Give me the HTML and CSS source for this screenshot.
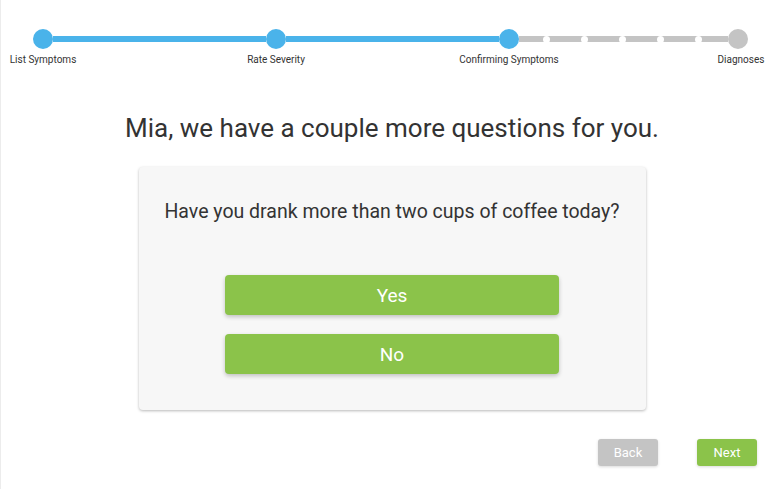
FILE: index.html
```html
<!DOCTYPE html>
<html>
<head>
<meta charset="utf-8">
<link rel="stylesheet" href="styles.css">
</head>
<body>
<div class="page">
  <div class="stepper">
    <div class="step"><div class="dot done"></div><div class="label">List Symptoms</div></div>
    <div class="line done l1"></div>
    <div class="step"><div class="dot done"></div><div class="label">Rate Severity</div></div>
    <div class="line done l2"></div>
    <div class="step"><div class="dot done"></div><div class="label">Confirming Symptoms</div></div>
    <div class="line todo l3">
      <span class="mini"></span><span class="mini"></span><span class="mini"></span><span class="mini"></span><span class="mini"></span>
    </div>
    <div class="step"><div class="dot todo"></div><div class="label last">Diagnoses</div></div>
  </div>

  <h1 class="title">Mia, we have a couple more questions for you.</h1>

  <div class="card">
    <p class="question">Have you drank more than two cups of coffee today?</p>
    <div class="answers">
      <button class="answer">Yes</button>
      <button class="answer">No</button>
    </div>
  </div>

  <div class="nav">
    <button class="navbtn back">Back</button>
    <button class="navbtn next">Next</button>
  </div>
</div>
</body>
</html>
```

FILE: styles.css
```css
* { box-sizing: border-box; }
html, body { margin: 0; padding: 0; background: #fff; }
body { font-family: Roboto, "Noto Sans", Arial, sans-serif; color: #333; }

.page {
  width: 783px;
  height: 489px;
  border-left: 1px solid #ececec;
  display: flex;
  flex-direction: column;
}

.stepper {
  display: flex;
  align-items: flex-start;
  padding: 29px 0 0 32px;
}
.step {
  width: 20px;
  flex: 0 0 20px;
  display: flex;
  flex-direction: column;
  align-items: center;
}
.dot {
  width: 20px;
  height: 20px;
  border-radius: 50%;
}
.dot.done { background: #4ab3ea; }
.dot.todo { background: #c4c4c4; }
.label {
  margin-top: 5px;
  font-size: 10px;
  line-height: 12px;
  white-space: nowrap;
  color: #333;
}
.label.last { position: relative; left: 3px; }

.line {
  flex: none;
  height: 6px;
  margin-top: 7px;
}
.line.l1 { width: 213px; }
.line.l2 { width: 213px; }
.line.l3 { width: 209px; }
.line.done { background: #4ab3ea; }
.line.todo {
  background: #c4c4c4;
  display: flex;
  align-items: center;
  gap: 31px;
  padding-left: 24px;
}
.mini {
  width: 7px;
  height: 7px;
  border-radius: 50%;
  background: #fff;
  flex: 0 0 7px;
}

.title {
  margin: 47px 0 0;
  font-size: 26px;
  line-height: 30px;
  font-weight: 400;
  text-align: center;
  color: #333;
}

.card {
  margin: 24px auto 0;
  width: 507px;
  height: 243px;
  background: #f7f7f7;
  border-radius: 4px;
  box-shadow: 0 1px 3px rgba(0,0,0,0.28);
  padding-top: 33px;
  display: flex;
  flex-direction: column;
  align-items: center;
}
.question {
  margin: 0;
  font-size: 19.5px;
  line-height: 23px;
  color: #333;
  white-space: nowrap;
}
.answers {
  margin-top: 52px;
  display: flex;
  flex-direction: column;
  gap: 19px;
}
.answer {
  width: 334px;
  height: 40px;
  border: none;
  border-radius: 4px;
  background: #8bc34a;
  color: #fff;
  font-family: inherit;
  font-size: 19px;
  box-shadow: 0 2px 4px rgba(0,0,0,0.22);
  cursor: pointer;
}

.nav {
  margin-top: 29px;
  display: flex;
  justify-content: flex-end;
  gap: 39px;
  padding-right: 26px;
}
.navbtn {
  width: 60px;
  height: 27px;
  border: none;
  border-radius: 3px;
  color: #fff;
  font-family: inherit;
  font-size: 13px;
  box-shadow: 0 1px 3px rgba(0,0,0,0.15);
}
.navbtn.back { background: #c4c4c4; }
.navbtn.next { background: #8bc34a; }
```
